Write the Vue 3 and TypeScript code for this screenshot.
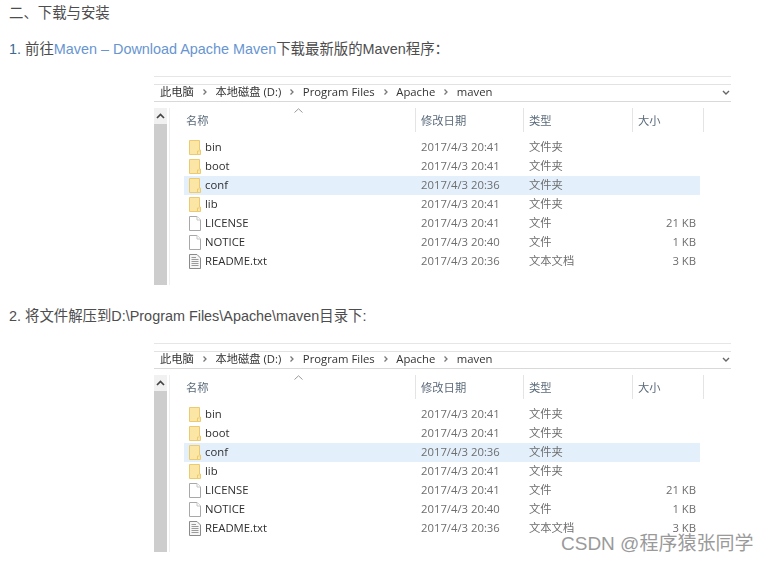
<script setup lang="ts">
interface Row {
  name: string
  date: string
  type: string
  size: string
  kind: 'folder' | 'file' | 'text'
  selected?: boolean
}

const crumbs: string[] = ['此电脑', '本地磁盘 (D:)', 'Program Files', 'Apache', 'maven']

const rows: Row[] = [
  { name: 'bin', date: '2017/4/3 20:41', type: '文件夹', size: '', kind: 'folder' },
  { name: 'boot', date: '2017/4/3 20:41', type: '文件夹', size: '', kind: 'folder' },
  { name: 'conf', date: '2017/4/3 20:36', type: '文件夹', size: '', kind: 'folder', selected: true },
  { name: 'lib', date: '2017/4/3 20:41', type: '文件夹', size: '', kind: 'folder' },
  { name: 'LICENSE', date: '2017/4/3 20:41', type: '文件', size: '21 KB', kind: 'file' },
  { name: 'NOTICE', date: '2017/4/3 20:40', type: '文件', size: '1 KB', kind: 'file' },
  { name: 'README.txt', date: '2017/4/3 20:36', type: '文本文档', size: '3 KB', kind: 'text' },
]

const shots = [
  { id: 1 },
  { id: 2 },
]
</script>

<template>
  <main class="page">
    <p class="line">二、下载与安装</p>
    <template v-for="shot in shots" :key="shot.id">
      <p v-if="shot.id === 1" class="line item">
        <span class="num">1.</span> 前往<a class="link">Maven – Download Apache Maven</a>下载最新版的Maven程序：
      </p>
      <p v-else class="line item second">
        2. 将文件解压到D:\Program Files\Apache\maven目录下:
      </p>
      <section class="explorer">
        <div class="address">
          <template v-for="(crumb, i) in crumbs" :key="crumb">
            <span class="crumb">{{ crumb }}</span>
            <svg v-if="i < crumbs.length - 1" class="sep" width="21.5" height="10" viewBox="0 0 21.5 10">
              <path d="M9.5 2.5 L12 5 L9.5 7.5" fill="none" stroke="#777" stroke-width="1.3" />
            </svg>
          </template>
          <svg class="drop" width="8" height="6" viewBox="0 0 8 6">
            <path d="M1 1 L4 4 L7 1" fill="none" stroke="#666" stroke-width="1.4" />
          </svg>
        </div>
        <div class="body">
          <div class="scroll">
            <div class="scroll-up">
              <svg width="9" height="6" viewBox="0 0 9 6">
                <path d="M1 5 L4.5 1.5 L8 5" fill="none" stroke="#444" stroke-width="1.7" />
              </svg>
            </div>
            <div class="thumb"></div>
          </div>
          <div class="list">
            <svg class="sort" width="9" height="5" viewBox="0 0 9 5">
              <path d="M0.5 4.5 L4.5 0.8 L8.5 4.5" fill="none" stroke="#999" stroke-width="1" />
            </svg>
            <div class="head">
              <span class="hcell first">名称</span>
              <span class="hcell">修改日期</span>
              <span class="hcell">类型</span>
              <span class="hcell">大小</span>
            </div>
            <div class="rows">
              <div v-for="row in rows" :key="row.name" class="row" :class="{ selected: row.selected }">
                <span class="icon">
                  <svg v-if="row.kind === 'folder'" width="12" height="15" viewBox="0 0 12 15">
                    <path d="M0.5 0.5 H10.5 V10 H11.5 V14.5 H0.5 Z" fill="#fbe6a6" stroke="#eccb70" />
                    <path d="M8.5 14 V11 H10.5" fill="none" stroke="#eccb70" />
                  </svg>
                  <svg v-else-if="row.kind === 'file'" width="12" height="15" viewBox="0 0 12 15">
                    <path d="M0.5 0.5 H8 L11.5 4 V14.5 H0.5 Z" fill="#fff" stroke="#a8a8a8" />
                    <path d="M8 0.5 V4 H11.5" fill="#fff" stroke="#c4c4c4" />
                  </svg>
                  <svg v-else width="12" height="15" viewBox="0 0 12 15">
                    <path d="M0.5 0.5 H8 L11.5 4 V14.5 H0.5 Z" fill="#f6f6f6" stroke="#8a8a8a" />
                    <path d="M2.5 3.5 H7 M2.5 5.5 H9.5 M2.5 7.5 H9.5 M2.5 9.5 H9.5 M2.5 11.5 H9.5" stroke="#9a9a9a" />
                  </svg>
                </span>
                <span class="name">{{ row.name }}</span>
                <span class="cell">{{ row.date }}</span>
                <span class="cell">{{ row.type }}</span>
                <span class="cell size">{{ row.size }}</span>
              </div>
            </div>
          </div>
        </div>
      </section>
    </template>
    <div class="mark">CSDN @程序猿张同学</div>
  </main>
</template>

<style scoped>
.page {
  position: relative;
  width: 767px;
  height: 563px;
  overflow: hidden;
  background: #fff;
  font-family: "Liberation Sans", "Noto Sans CJK SC", sans-serif;
  color: #4d4d4d;
}
.line {
  margin: 0;
  padding-left: 9px;
  height: 26px;
  font-size: 14.4px;
  line-height: 26px;
  color: #4d4d4d;
  white-space: nowrap;
}
.item {
  margin-top: 10px;
}
.second {
  margin-top: 18px;
}
.num {
  color: #3a6a94;
}
.link {
  color: #6795d1;
}
.explorer {
  width: 577px;
  height: 209px;
  margin: 14px 0 0 154px;
  display: flex;
  flex-direction: column;
  padding-top: 7px;
  box-sizing: border-box;
  border-top: 1px solid #e6e6e6;
  font-family: "Open Sans", "Noto Sans CJK SC", sans-serif;
  font-size: 11.3px;
  filter: blur(0.3px);
}
.address {
  display: flex;
  align-items: center;
  height: 18px;
  flex: none;
  padding-left: 6px;
  padding-bottom: 3px;
  box-sizing: border-box;
  border-top: 1px solid #e2e2e2;
  border-bottom: 1px solid #d9d9d9;
  color: #333;
  position: relative;
}
.crumb {
  white-space: nowrap;
  line-height: 16px;
}
.sep {
  flex: none;
}
.drop {
  position: absolute;
  right: 1px;
  top: 5px;
}
.body {
  flex: 1;
  display: flex;
  min-height: 0;
  padding-top: 6px;
}
.scroll {
  width: 13px;
  flex: none;
  display: flex;
  flex-direction: column;
  margin-right: 2px;
}
.scroll-up {
  height: 16px;
  background: #f1f1f1;
  display: flex;
  align-items: center;
  justify-content: center;
}
.thumb {
  flex: 1;
  background: #cdcdcd;
}
.list {
  flex: 1;
  position: relative;
  border-left: 1px solid #efefef;
}
.sort {
  position: absolute;
  left: 124px;
  top: 0;
}
.head {
  display: grid;
  grid-template-columns: 246px 108px 109px 71px;
  height: 24px;
  color: #5a6a7a;
}
.hcell {
  border-right: 1px solid #e4e4e4;
  padding-left: 5px;
  padding-top: 5px;
  box-sizing: border-box;
  line-height: 16px;
  white-space: nowrap;
}
.hcell.first {
  padding-left: 16px;
}
.rows {
  margin-top: 6px;
  width: 516px;
  margin-left: 14px;
}
.row {
  display: grid;
  grid-template-columns: 21px 216px 108px 96px 1fr;
  height: 19px;
  align-items: center;
  white-space: nowrap;
}
.row.selected {
  background: #e3effb;
}
.icon {
  display: flex;
  padding-left: 5px;
  align-items: center;
  height: 19px;
}
.name,
.cell {
  line-height: 15px;
  padding-bottom: 2px;
}
.name {
  color: #2f2f2f;
}
.cell {
  color: #6e6e6e;
}
.size {
  text-align: right;
  padding-right: 4px;
}
.mark {
  position: absolute;
  left: 561px;
  top: 536px;
  font-size: 19px;
  line-height: 16px;
  color: #9a9a9a;
  white-space: nowrap;
}
</style>
